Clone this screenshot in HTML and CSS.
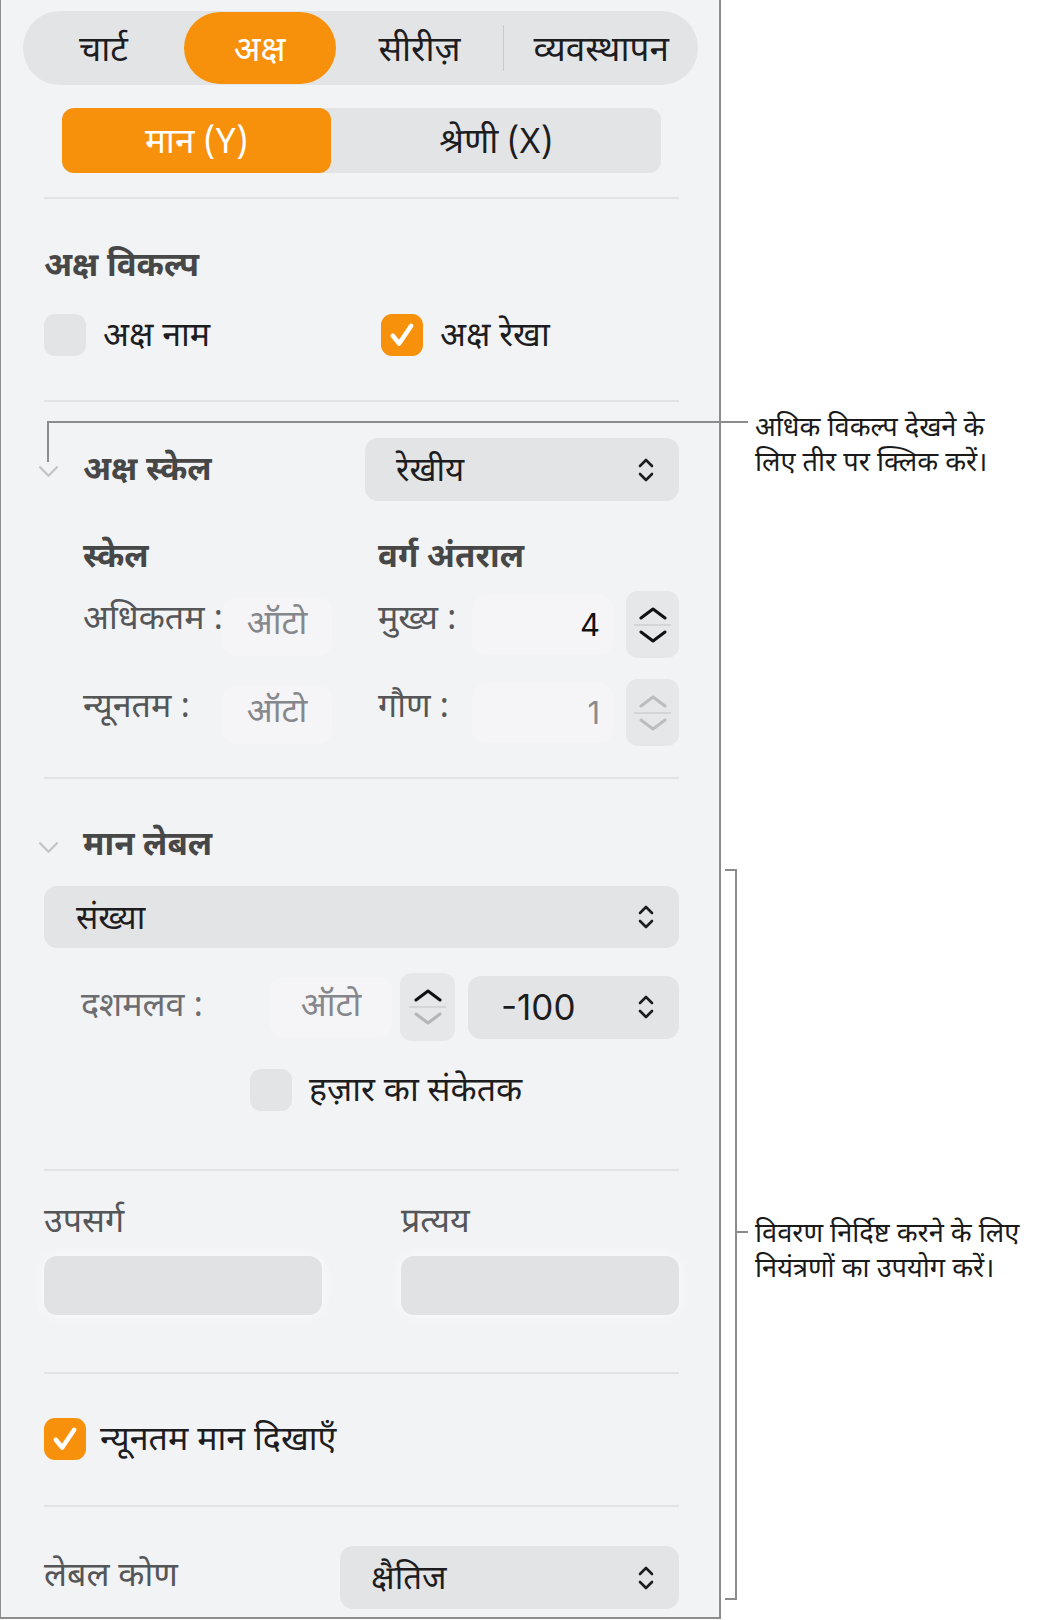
FILE: index.html
```html
<!DOCTYPE html>
<html lang="hi">
<head>
<meta charset="utf-8">
<title>अक्ष</title>
<link rel="stylesheet" href="styles.css">
</head>
<body>
<div class="page">
  <div class="panel">
    <div class="tabs">
      <div class="tab t1">चार्ट</div>
      <div class="tab t2 on">अक्ष</div>
      <div class="tab t3">सीरीज़</div>
      <div class="tab-sep"></div>
      <div class="tab t4">व्यवस्थापन</div>
    </div>

    <div class="subtabs">
      <div class="subtab on">मान (Y)</div>
      <div class="subtab">श्रेणी (X)</div>
    </div>

    <div class="rule r1"></div>

    <div class="heading h-opts">अक्ष विकल्प</div>
    <div class="row checks">
      <label class="check c-name"><span class="box"></span><span>अक्ष नाम</span></label>
      <label class="check c-line"><span class="box checked"><svg viewBox="0 0 24 24"><path d="M5.5 12.5l4.5 5.5 8.5-12.5"/></svg></span><span>अक्ष रेखा</span></label>
    </div>

    <div class="rule r2"></div>

    <div class="row scale-head">
      <span class="disclosure"><svg viewBox="0 0 20 12"><path d="M2 2l8 8 8-8"/></svg></span>
      <span class="heading">अक्ष स्केल</span>
      <div class="popup p-scale"><span>रेखीय</span><svg class="updown" viewBox="0 0 20 28"><path d="M4 10l6-6 6 6M4 18l6 6 6-6"/></svg></div>
    </div>

    <div class="grid2 g-heads">
      <span class="sub-h">स्केल</span>
      <span class="sub-h">वर्ग अंतराल</span>
    </div>

    <div class="grid2 g-row g-max">
      <div class="pair"><span class="lbl">अधिकतम :</span><span class="field auto">ऑटो</span></div>
      <div class="pair right"><span class="lbl">मुख्य :</span><span class="field num">4</span>
        <div class="stepper"><svg viewBox="0 0 32 14"><path d="M4 12L16 3l12 9"/></svg><i></i><svg viewBox="0 0 32 14"><path d="M4 2l12 9 12-9"/></svg></div>
      </div>
    </div>

    <div class="grid2 g-row g-min">
      <div class="pair"><span class="lbl">न्यूनतम :</span><span class="field auto">ऑटो</span></div>
      <div class="pair right"><span class="lbl">गौण :</span><span class="field num dim">1</span>
        <div class="stepper off"><svg viewBox="0 0 32 14"><path d="M4 12L16 3l12 9"/></svg><i></i><svg viewBox="0 0 32 14"><path d="M4 2l12 9 12-9"/></svg></div>
      </div>
    </div>

    <div class="rule r3"></div>

    <div class="row label-head">
      <span class="disclosure"><svg viewBox="0 0 20 12"><path d="M2 2l8 8 8-8"/></svg></span>
      <span class="heading">मान लेबल</span>
    </div>

    <div class="popup p-format"><span>संख्या</span><svg class="updown" viewBox="0 0 20 28"><path d="M4 10l6-6 6 6M4 18l6 6 6-6"/></svg></div>

    <div class="row decimals">
      <span class="lbl light">दशमलव :</span>
      <span class="field auto wide">ऑटो</span>
      <div class="stepper half"><svg viewBox="0 0 32 14"><path d="M4 12L16 3l12 9"/></svg><i></i><svg class="dimmed" viewBox="0 0 32 14"><path d="M4 2l12 9 12-9"/></svg></div>
      <div class="popup p-neg"><span>-100</span><svg class="updown" viewBox="0 0 20 28"><path d="M4 10l6-6 6 6M4 18l6 6 6-6"/></svg></div>
    </div>

    <div class="row thousands">
      <label class="check"><span class="box"></span><span>हज़ार का संकेतक</span></label>
    </div>

    <div class="rule r4"></div>

    <div class="grid-affix affix-heads">
      <span class="lbl">उपसर्ग</span>
      <span class="lbl">प्रत्यय</span>
    </div>
    <div class="grid-affix affix-fields">
      <span class="input"></span>
      <span class="input"></span>
    </div>

    <div class="rule r5"></div>

    <div class="row showmin">
      <label class="check"><span class="box checked"><svg viewBox="0 0 24 24"><path d="M5.5 12.5l4.5 5.5 8.5-12.5"/></svg></span><span>न्यूनतम मान दिखाएँ</span></label>
    </div>

    <div class="rule r6"></div>

    <div class="row angle">
      <span class="lbl">लेबल कोण</span>
      <div class="popup p-angle"><span>क्षैतिज</span><svg class="updown" viewBox="0 0 20 28"><path d="M4 10l6-6 6 6M4 18l6 6 6-6"/></svg></div>
    </div>
  </div>

  <div class="callout-line cl-h"></div>
  <div class="callout-line cl-v"></div>
  <p class="note n1">अधिक विकल्प देखने के<br>लिए तीर पर क्लिक करें।</p>

  <div class="bracket"></div>
  <div class="bracket-tick"></div>
  <p class="note n2">विवरण निर्दिष्ट करने के लिए<br>नियंत्रणों का उपयोग करें।</p>
</div>
</body>
</html>
```

FILE: styles.css
```css
* { box-sizing: border-box; }

html, body {
  margin: 0;
  padding: 0;
  background: #ffffff;
}

body {
  font-family: "Noto Sans Devanagari", "Noto Sans", "Roboto", sans-serif;
  color: #1d1d1f;
  font-size: 34px;
  line-height: 1.2;
}

.page {
  position: relative;
  width: 1045px;
  height: 1620px;
}

/* ---------- side panel ---------- */
.panel {
  width: 721px;
  height: 1619px;
  background: #f2f3f5;
  border-left: 1px solid #8d8d8d;
  border-right: 2px solid #8d8d8d;
  border-bottom: 2px solid #8d8d8d;
  padding: 11px 40px 0 43px;
  display: flex;
  flex-direction: column;
}

.tabs {
  margin: 0 -19px 0 -21px;
  height: 74px;
  border-radius: 37px;
  background: #e3e4e6;
  display: flex;
  align-items: center;
  font-size: 35px;
}
.tab {
  height: 72px;
  display: flex;
  align-items: center;
  justify-content: center;
  padding-top: 10px;
  color: #1d1d1f;
}
.t1 { width: 161px; }
.t2 { width: 152px; }
.t3 { width: 168px; }
.t4 { width: 194px; }
.tab.on {
  background: #f7910b;
  color: #ffffff;
  border-radius: 36px;
}
.tab-sep {
  width: 1px;
  height: 46px;
  background: #c9cacc;
}

.subtabs {
  margin: 23px 0 0 18px;
  width: 599px;
  height: 65px;
  border-radius: 12px;
  background: #e3e4e6;
  display: flex;
  font-size: 35px;
}
.subtab {
  flex: 1;
  display: flex;
  align-items: center;
  justify-content: center;
  padding-top: 8px;
}
.subtab.on {
  flex: 0 0 269px;
  background: #f7910b;
  color: #fff;
  border-radius: 12px;
}

.rule {
  height: 2px;
  background: #e2e3e5;
  flex: none;
}
.r1 { margin-top: 24px; }
.r2 { margin-top: 44px; }
.r3 { margin-top: 31px; }
.r4 { margin-top: 58px; }
.r5 { margin-top: 57px; }
.r6 { margin-top: 45px; }

.heading {
  font-weight: 700;
  color: #474747;
  font-size: 33px;
}
.h-opts {
  margin-top: 46px;
  height: 40px;
  line-height: 46px;
}

.row {
  display: flex;
  align-items: center;
}

/* checkboxes */
.check {
  display: flex;
  align-items: center;
  gap: 17px;
  color: #1d1d1f;
  white-space: nowrap;
}
.check > span:last-child { padding-top: 6px; }
.box {
  width: 42px;
  height: 42px;
  border-radius: 11px;
  background: #e3e4e6;
  display: flex;
  align-items: center;
  justify-content: center;
  flex: none;
}
.box.checked { background: #f7910b; }
.box svg {
  width: 34px;
  height: 34px;
  fill: none;
  stroke: #fff;
  stroke-width: 3.2;
  stroke-linecap: round;
  stroke-linejoin: round;
}

.checks {
  margin-top: 29px;
  height: 42px;
}
.c-name { width: 337px; }

/* disclosure headings */
.disclosure {
  width: 21px;
  margin-left: -6px;
  margin-right: 24px;
  display: flex;
}
.disclosure svg {
  width: 21px;
  height: 13px;
  fill: none;
  stroke: #c3c4c6;
  stroke-width: 2.2;
  stroke-linecap: round;
  stroke-linejoin: round;
}

.scale-head {
  margin-top: 36px;
  height: 63px;
}
.scale-head .disclosure svg { margin-top: 4px; }
.scale-head .heading { padding-top: 4px; }

/* pop-up buttons */
.popup {
  height: 63px;
  border-radius: 13px;
  background: #e3e4e6;
  display: flex;
  align-items: center;
  justify-content: space-between;
  padding: 0 23px 0 31px;
  color: #1d1d1f;
  font-size: 33px;
}
.popup > span { padding-top: 7px; }
.updown {
  width: 20px;
  height: 28px;
  fill: none;
  stroke: #1d1d1f;
  stroke-width: 2.6;
  stroke-linecap: round;
  stroke-linejoin: round;
}
.p-scale {
  margin-left: auto;
  width: 314px;
}

.grid2 {
  display: grid;
  grid-template-columns: 295px 1fr;
  padding-left: 39px;
}
.g-heads {
  margin-top: 34px;
  height: 40px;
  align-items: center;
}
.sub-h {
  font-weight: 700;
  color: #474747;
  font-size: 33px;
  padding-top: 4px;
}

.g-row { height: 67px; }
.g-max { margin-top: 16px; }
.g-min { margin-top: 21px; }

.pair {
  display: flex;
  align-items: center;
}
.lbl {
  color: #555658;
  white-space: nowrap;
}
.lbl.light { color: #6c6d70; }
.g-row .lbl { margin-top: -6px; }

.field {
  display: flex;
  align-items: center;
  border-radius: 14px;
  background: rgba(255, 255, 255, 0.22);
  flex: none;
}
.field.auto {
  color: #86878a;
  justify-content: center;
}
.g-row .lbl:first-child { width: 139px; flex: none; }
.g-row .field.auto {
  width: 110px;
  height: 58px;
  margin-top: 4px;
}
.field.num {
  width: 140px;
  height: 60px;
  justify-content: flex-end;
  padding-right: 13px;
  margin-left: auto;
  margin-right: 13px;
  font-family: "Inter", "Roboto", sans-serif;
  font-size: 31px;
  color: #111;
}
.field.num.dim { color: #8a8b8e; }
.pair.right .lbl { width: auto; }

/* steppers */
.stepper {
  width: 53px;
  height: 67px;
  border-radius: 12px;
  background: #e6e7e9;
  display: flex;
  flex-direction: column;
  align-items: center;
  justify-content: center;
  gap: 4px;
  flex: none;
}
.stepper svg {
  width: 32px;
  height: 14px;
  fill: none;
  stroke: #111;
  stroke-width: 3;
  stroke-linecap: round;
  stroke-linejoin: round;
}
.stepper i {
  display: block;
  width: 37px;
  height: 2px;
  background: #d4d5d7;
}
.stepper.off svg { stroke: #bcbdbf; }
.stepper .dimmed { stroke: #b4b5b8; }

.label-head {
  margin-top: 46px;
  height: 40px;
}
.label-head .disclosure svg { margin-top: 4px; }
.label-head .heading { padding-top: 4px; }

.p-format {
  margin-top: 21px;
  height: 62px;
  padding-left: 32px;
}

.decimals {
  margin-top: 26px;
  height: 66px;
  padding-left: 37px;
}
.decimals .lbl { width: 189px; flex: none; padding-top: 2px; }
.field.wide {
  width: 122px;
  height: 60px;
  margin-right: 8px;
  padding-top: 2px;
}
.stepper.half { height: 68px; width: 55px; }
.p-neg {
  margin-left: auto;
  width: 211px;
  height: 63px;
  padding-left: 33px;
  font-family: "Inter", "Roboto", sans-serif;
  font-size: 35px;
}
.p-neg > span { padding-top: 0; }

.thousands {
  margin-top: 29px;
  height: 42px;
  padding-left: 206px;
}

.grid-affix {
  display: grid;
  grid-template-columns: 278px 278px;
  column-gap: 79px;
}
.affix-heads {
  margin-top: 29px;
  height: 40px;
  align-items: center;
}
.affix-heads .lbl { padding-top: 4px; }
.affix-fields {
  margin-top: 16px;
}
.input {
  height: 59px;
  border-radius: 13px;
  background: #e1e2e4;
  box-shadow: 0 0 14px rgba(255, 255, 255, 0.8);
}

.showmin {
  margin-top: 44px;
  height: 42px;
}
.showmin .check { gap: 14px; }

.angle {
  margin-top: 39px;
  height: 63px;
}
.angle .lbl { margin-top: 2px; }
.p-angle {
  margin-left: auto;
  width: 339px;
}

/* ---------- callouts ---------- */
.callout-line {
  position: absolute;
  background: #8c8c8c;
}
.cl-h {
  left: 47px;
  top: 421px;
  width: 701px;
  height: 2px;
}
.cl-v {
  left: 47px;
  top: 421px;
  width: 2px;
  height: 41px;
}

.note {
  position: absolute;
  margin: 0;
  left: 755px;
  font-size: 27.2px;
  line-height: 35px;
  color: #1a1a1a;
}
.n1 { top: 412px; }
.n2 { top: 1218px; }

.bracket {
  position: absolute;
  left: 725px;
  top: 869px;
  width: 12px;
  height: 731px;
  border-top: 2px solid #8c8c8c;
  border-right: 2px solid #8c8c8c;
  border-bottom: 2px solid #8c8c8c;
}
.bracket-tick {
  position: absolute;
  left: 736px;
  top: 1231px;
  width: 12px;
  height: 2px;
  background: #8c8c8c;
}
```
